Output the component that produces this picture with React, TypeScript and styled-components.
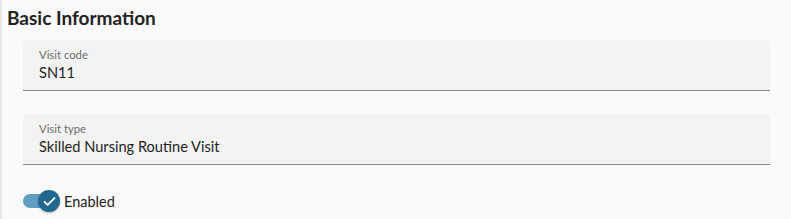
import styled, { createGlobalStyle } from "styled-components";

const GlobalStyle = createGlobalStyle`
  html, body {
    margin: 0;
    padding: 0;
    background: #fafafa;
    font-family: Lato, "Open Sans", sans-serif;
  }
`;

const Page = styled.div`
  width: 791px;
  height: 219px;
  box-sizing: border-box;
  padding: 6px 21px 0 7px;
  background: #fafafa;
  box-shadow: inset 3px 0 3px -2px rgba(0, 0, 0, 0.12);
`;

const Title = styled.h2`
  margin: 0 0 10px;
  font-size: 19px;
  line-height: 24px;
  font-weight: 700;
  color: #222;
`;

const Fields = styled.div`
  display: flex;
  flex-direction: column;
  gap: 23px;
  padding-left: 16px;
`;

const Field = styled.div`
  background: #f3f3f3;
  border-radius: 4px 4px 0 0;
  border-bottom: 1px solid #8a8a8a;
  height: 51px;
  box-sizing: border-box;
  padding: 7px 16px 0;
  display: flex;
  flex-direction: column;
`;

const Label = styled.span`
  font-size: 11.3px;
  line-height: 15px;
  color: #6b6b6b;
`;

const Value = styled.span`
  font-size: 14.6px;
  line-height: 20px;
  color: #1f1f1f;
  margin-top: 1px;
`;

const ToggleRow = styled.label`
  display: flex;
  align-items: center;
  gap: 4px;
  margin: 25px 0 0 16px;
  font-size: 14.5px;
  color: #222;
`;

const Track = styled.span`
  position: relative;
  width: 37px;
  height: 22px;
  display: inline-flex;
  align-items: center;
`;

const Rail = styled.span`
  width: 30px;
  height: 14px;
  border-radius: 7px;
  background: #5f9ec2;
`;

const Thumb = styled.span`
  position: absolute;
  right: 0;
  top: 0;
  width: 22px;
  height: 22px;
  border-radius: 50%;
  background: #21688f;
  box-shadow: 0 1px 2px rgba(0, 0, 0, 0.3);
  display: flex;
  align-items: center;
  justify-content: center;
`;

export default function App() {
  return (
    <>
      <GlobalStyle />
      <Page>
        <Title>Basic Information</Title>
        <Fields>
          <Field>
            <Label>Visit code</Label>
            <Value>SN11</Value>
          </Field>
          <Field>
            <Label>Visit type</Label>
            <Value>Skilled Nursing Routine Visit</Value>
          </Field>
        </Fields>
        <ToggleRow>
          <Track>
            <Rail />
            <Thumb>
              <svg width="15" height="15" viewBox="0 0 24 24">
                <path d="M4 12.5l5 5L20 6.5" fill="none" stroke="#fff" strokeWidth="3" strokeLinecap="round" strokeLinejoin="round" />
              </svg>
            </Thumb>
          </Track>
          Enabled
        </ToggleRow>
      </Page>
    </>
  );
}
